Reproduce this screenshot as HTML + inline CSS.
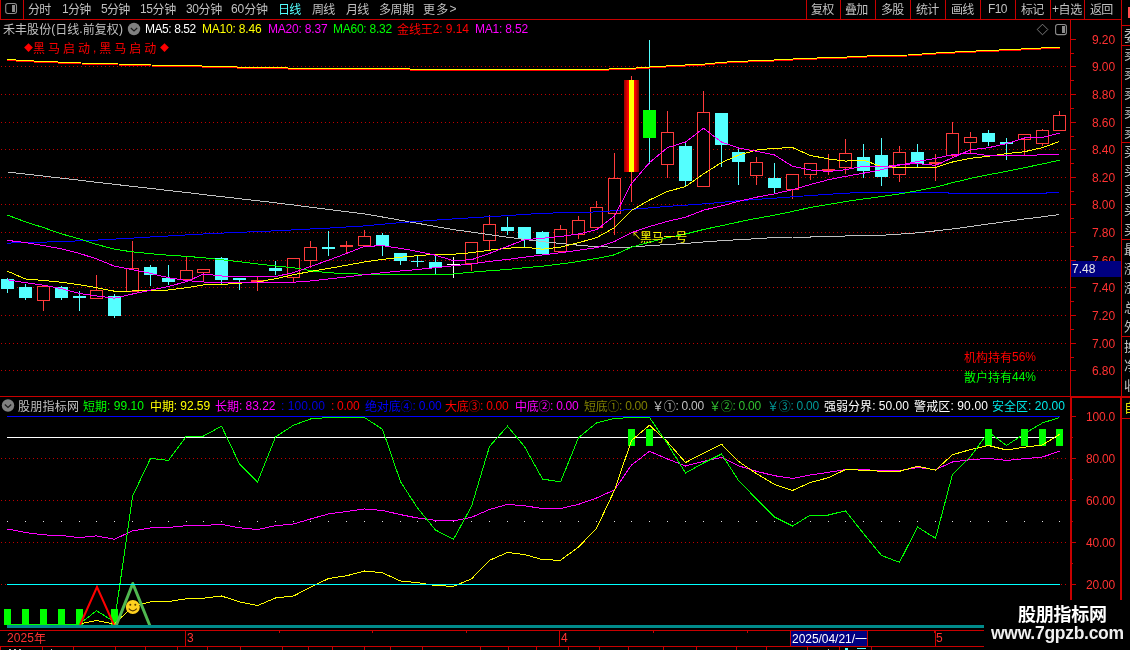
<!DOCTYPE html>
<html lang="zh"><head><meta charset="utf-8"><title>禾丰股份 日线</title>
<style>
html,body{margin:0;padding:0;background:#000;}
#app{position:relative;width:1130px;height:650px;overflow:hidden;background:#000;font-family:"Liberation Sans","Noto Sans CJK SC",sans-serif;}
svg{position:absolute;left:0;top:0;}
.t{position:absolute;white-space:nowrap;will-change:transform;}
.c{position:relative;top:1px;}
</style></head><body><div id="app">
<svg width="1130" height="650" viewBox="0 0 1130 650" shape-rendering="crispEdges">
<defs><linearGradient id="gb" x1="0" x2="1" y1="0" y2="0"><stop offset="0" stop-color="#7a0000"/><stop offset="0.2" stop-color="#d00000"/><stop offset="0.36" stop-color="#ff2000"/><stop offset="0.42" stop-color="#ffff00"/><stop offset="0.6" stop-color="#ffff00"/><stop offset="0.66" stop-color="#ff2000"/><stop offset="0.8" stop-color="#d00000"/><stop offset="1" stop-color="#7a0000"/></linearGradient></defs>
<line x1="1" y1="66.5" x2="1067" y2="66.5" stroke="#c00000" stroke-dasharray="1 3"/>
<line x1="1" y1="94.5" x2="1067" y2="94.5" stroke="#c00000" stroke-dasharray="1 3"/>
<line x1="1" y1="122.5" x2="1067" y2="122.5" stroke="#c00000" stroke-dasharray="1 3"/>
<line x1="1" y1="149.5" x2="1067" y2="149.5" stroke="#c00000" stroke-dasharray="1 3"/>
<line x1="1" y1="177.5" x2="1067" y2="177.5" stroke="#c00000" stroke-dasharray="1 3"/>
<line x1="1" y1="204.5" x2="1067" y2="204.5" stroke="#c00000" stroke-dasharray="1 3"/>
<line x1="1" y1="232.5" x2="1067" y2="232.5" stroke="#c00000" stroke-dasharray="1 3"/>
<line x1="1" y1="260.5" x2="1067" y2="260.5" stroke="#c00000" stroke-dasharray="1 3"/>
<line x1="1" y1="287.5" x2="1067" y2="287.5" stroke="#c00000" stroke-dasharray="1 3"/>
<line x1="1" y1="315.5" x2="1067" y2="315.5" stroke="#c00000" stroke-dasharray="1 3"/>
<line x1="1" y1="343.5" x2="1067" y2="343.5" stroke="#c00000" stroke-dasharray="1 3"/>
<line x1="1" y1="370.5" x2="1067" y2="370.5" stroke="#c00000" stroke-dasharray="1 3"/>
<line x1="1" y1="458.5" x2="1067" y2="458.5" stroke="#c00000" stroke-dasharray="1 3"/>
<line x1="1" y1="500.5" x2="1067" y2="500.5" stroke="#c00000" stroke-dasharray="1 3"/>
<line x1="1" y1="542.5" x2="1067" y2="542.5" stroke="#c00000" stroke-dasharray="1 3"/>
<line x1="1" y1="584.5" x2="1067" y2="584.5" stroke="#c00000" stroke-dasharray="1 3"/>
<rect x="0" y="19" width="1122" height="1" fill="#c80000"/>
<rect x="0" y="0" width="1" height="20" fill="#c80000"/>
<rect x="23" y="0" width="1" height="20" fill="#c80000"/>
<rect x="806" y="0" width="1" height="20" fill="#c80000"/>
<rect x="840" y="0" width="1" height="20" fill="#c80000"/>
<rect x="875" y="0" width="1" height="20" fill="#c80000"/>
<rect x="910" y="0" width="1" height="20" fill="#c80000"/>
<rect x="945" y="0" width="1" height="20" fill="#c80000"/>
<rect x="980" y="0" width="1" height="20" fill="#c80000"/>
<rect x="1015" y="0" width="1" height="20" fill="#c80000"/>
<rect x="1050" y="0" width="1" height="20" fill="#c80000"/>
<rect x="1084" y="0" width="1" height="20" fill="#c80000"/>
<rect x="1121" y="0" width="1" height="600" fill="#c80000"/>
<rect x="1070" y="19" width="1" height="581" fill="#c80000"/>
<rect x="1120" y="396" width="1" height="204" fill="#c80000"/>
<rect x="1071" y="396" width="1" height="204" fill="#c80000"/>
<rect x="0" y="396" width="1130" height="1" fill="#c80000"/>
<rect x="1070" y="397" width="60" height="1" fill="#c80000"/>
<rect x="1122" y="418" width="8" height="1" fill="#c80000"/>
<rect x="1121" y="25" width="9" height="1" fill="#c80000"/>
<rect x="1121" y="45" width="9" height="1" fill="#c80000"/>
<rect x="1121" y="142" width="9" height="1" fill="#c80000"/>
<rect x="1121" y="239" width="9" height="1" fill="#c80000"/>
<rect x="1121" y="336" width="9" height="1" fill="#c80000"/>
<rect x="0" y="630" width="984" height="1" fill="#c80000"/>
<rect x="0" y="646" width="984" height="1" fill="#c80000"/>
<rect x="1071" y="39" width="5" height="1" fill="#c80000"/>
<rect x="1071" y="53" width="3" height="1" fill="#c80000"/>
<rect x="1071" y="66" width="5" height="1" fill="#c80000"/>
<rect x="1071" y="80" width="3" height="1" fill="#c80000"/>
<rect x="1071" y="94" width="5" height="1" fill="#c80000"/>
<rect x="1071" y="108" width="3" height="1" fill="#c80000"/>
<rect x="1071" y="122" width="5" height="1" fill="#c80000"/>
<rect x="1071" y="136" width="3" height="1" fill="#c80000"/>
<rect x="1071" y="149" width="5" height="1" fill="#c80000"/>
<rect x="1071" y="163" width="3" height="1" fill="#c80000"/>
<rect x="1071" y="177" width="5" height="1" fill="#c80000"/>
<rect x="1071" y="191" width="3" height="1" fill="#c80000"/>
<rect x="1071" y="204" width="5" height="1" fill="#c80000"/>
<rect x="1071" y="218" width="3" height="1" fill="#c80000"/>
<rect x="1071" y="232" width="5" height="1" fill="#c80000"/>
<rect x="1071" y="246" width="3" height="1" fill="#c80000"/>
<rect x="1071" y="260" width="5" height="1" fill="#c80000"/>
<rect x="1071" y="274" width="3" height="1" fill="#c80000"/>
<rect x="1071" y="287" width="5" height="1" fill="#c80000"/>
<rect x="1071" y="301" width="3" height="1" fill="#c80000"/>
<rect x="1071" y="315" width="5" height="1" fill="#c80000"/>
<rect x="1071" y="329" width="3" height="1" fill="#c80000"/>
<rect x="1071" y="343" width="5" height="1" fill="#c80000"/>
<rect x="1071" y="357" width="3" height="1" fill="#c80000"/>
<rect x="1071" y="370" width="5" height="1" fill="#c80000"/>
<rect x="1071" y="416" width="5" height="1" fill="#c80000"/>
<rect x="1071" y="437" width="2" height="1" fill="#c80000"/>
<rect x="1071" y="458" width="5" height="1" fill="#c80000"/>
<rect x="1071" y="479" width="2" height="1" fill="#c80000"/>
<rect x="1071" y="500" width="5" height="1" fill="#c80000"/>
<rect x="1071" y="521" width="2" height="1" fill="#c80000"/>
<rect x="1071" y="542" width="5" height="1" fill="#c80000"/>
<rect x="1071" y="563" width="2" height="1" fill="#c80000"/>
<rect x="1071" y="584" width="5" height="1" fill="#c80000"/>
<rect x="7" y="416" width="1053" height="1" fill="#0000ff"/>
<rect x="7" y="437" width="1053" height="1" fill="#ffffff"/>
<rect x="7" y="584" width="1053" height="1" fill="#00ffff"/>
<rect x="7" y="521" width="1" height="1" fill="#e0e0e0"/>
<rect x="25" y="521" width="1" height="1" fill="#e0e0e0"/>
<rect x="43" y="521" width="1" height="1" fill="#e0e0e0"/>
<rect x="61" y="521" width="1" height="1" fill="#e0e0e0"/>
<rect x="79" y="521" width="1" height="1" fill="#e0e0e0"/>
<rect x="96" y="521" width="1" height="1" fill="#e0e0e0"/>
<rect x="114" y="521" width="1" height="1" fill="#e0e0e0"/>
<rect x="132" y="521" width="1" height="1" fill="#e0e0e0"/>
<rect x="150" y="521" width="1" height="1" fill="#e0e0e0"/>
<rect x="168" y="521" width="1" height="1" fill="#e0e0e0"/>
<rect x="186" y="521" width="1" height="1" fill="#e0e0e0"/>
<rect x="203" y="521" width="1" height="1" fill="#e0e0e0"/>
<rect x="221" y="521" width="1" height="1" fill="#e0e0e0"/>
<rect x="239" y="521" width="1" height="1" fill="#e0e0e0"/>
<rect x="257" y="521" width="1" height="1" fill="#e0e0e0"/>
<rect x="275" y="521" width="1" height="1" fill="#e0e0e0"/>
<rect x="293" y="521" width="1" height="1" fill="#e0e0e0"/>
<rect x="310" y="521" width="1" height="1" fill="#e0e0e0"/>
<rect x="328" y="521" width="1" height="1" fill="#e0e0e0"/>
<rect x="346" y="521" width="1" height="1" fill="#e0e0e0"/>
<rect x="364" y="521" width="1" height="1" fill="#e0e0e0"/>
<rect x="382" y="521" width="1" height="1" fill="#e0e0e0"/>
<rect x="400" y="521" width="1" height="1" fill="#e0e0e0"/>
<rect x="417" y="521" width="1" height="1" fill="#e0e0e0"/>
<rect x="435" y="521" width="1" height="1" fill="#e0e0e0"/>
<rect x="453" y="521" width="1" height="1" fill="#e0e0e0"/>
<rect x="471" y="521" width="1" height="1" fill="#e0e0e0"/>
<rect x="489" y="521" width="1" height="1" fill="#e0e0e0"/>
<rect x="507" y="521" width="1" height="1" fill="#e0e0e0"/>
<rect x="524" y="521" width="1" height="1" fill="#e0e0e0"/>
<rect x="542" y="521" width="1" height="1" fill="#e0e0e0"/>
<rect x="560" y="521" width="1" height="1" fill="#e0e0e0"/>
<rect x="578" y="521" width="1" height="1" fill="#e0e0e0"/>
<rect x="596" y="521" width="1" height="1" fill="#e0e0e0"/>
<rect x="614" y="521" width="1" height="1" fill="#e0e0e0"/>
<rect x="631" y="521" width="1" height="1" fill="#e0e0e0"/>
<rect x="649" y="521" width="1" height="1" fill="#e0e0e0"/>
<rect x="667" y="521" width="1" height="1" fill="#e0e0e0"/>
<rect x="685" y="521" width="1" height="1" fill="#e0e0e0"/>
<rect x="703" y="521" width="1" height="1" fill="#e0e0e0"/>
<rect x="721" y="521" width="1" height="1" fill="#e0e0e0"/>
<rect x="738" y="521" width="1" height="1" fill="#e0e0e0"/>
<rect x="756" y="521" width="1" height="1" fill="#e0e0e0"/>
<rect x="774" y="521" width="1" height="1" fill="#e0e0e0"/>
<rect x="792" y="521" width="1" height="1" fill="#e0e0e0"/>
<rect x="810" y="521" width="1" height="1" fill="#e0e0e0"/>
<rect x="828" y="521" width="1" height="1" fill="#e0e0e0"/>
<rect x="845" y="521" width="1" height="1" fill="#e0e0e0"/>
<rect x="863" y="521" width="1" height="1" fill="#e0e0e0"/>
<rect x="881" y="521" width="1" height="1" fill="#e0e0e0"/>
<rect x="899" y="521" width="1" height="1" fill="#e0e0e0"/>
<rect x="917" y="521" width="1" height="1" fill="#e0e0e0"/>
<rect x="935" y="521" width="1" height="1" fill="#e0e0e0"/>
<rect x="952" y="521" width="1" height="1" fill="#e0e0e0"/>
<rect x="970" y="521" width="1" height="1" fill="#e0e0e0"/>
<rect x="988" y="521" width="1" height="1" fill="#e0e0e0"/>
<rect x="1006" y="521" width="1" height="1" fill="#e0e0e0"/>
<rect x="1024" y="521" width="1" height="1" fill="#e0e0e0"/>
<rect x="1042" y="521" width="1" height="1" fill="#e0e0e0"/>
<rect x="1059" y="521" width="1" height="1" fill="#e0e0e0"/>
<rect x="7" y="625" width="977" height="3" fill="#008b8b"/>
<rect x="7" y="278" width="1" height="15" fill="#54ffff"/>
<rect x="1" y="279" width="13" height="10" fill="#54ffff"/>
<rect x="25" y="284" width="1" height="16" fill="#54ffff"/>
<rect x="19" y="287" width="13" height="11" fill="#54ffff"/>
<rect x="43" y="301" width="1" height="10" fill="#ff3c3c"/>
<rect x="37.5" y="286.5" width="12" height="14" fill="#000" stroke="#ff3c3c"/>
<rect x="61" y="286" width="1" height="14" fill="#54ffff"/>
<rect x="55" y="287" width="13" height="11" fill="#54ffff"/>
<rect x="79" y="291" width="1" height="20" fill="#54ffff"/>
<rect x="73" y="296" width="13" height="2" fill="#54ffff"/>
<rect x="96" y="275" width="1" height="15" fill="#ff3c3c"/>
<rect x="90.5" y="290.5" width="12" height="8" fill="#000" stroke="#ff3c3c"/>
<rect x="114" y="294" width="1" height="24" fill="#54ffff"/>
<rect x="108" y="296" width="13" height="20" fill="#54ffff"/>
<rect x="132" y="241" width="1" height="27" fill="#ff3c3c"/>
<rect x="126.5" y="268.5" width="12" height="23" fill="#000" stroke="#ff3c3c"/>
<rect x="150" y="265" width="1" height="21" fill="#54ffff"/>
<rect x="144" y="267" width="13" height="8" fill="#54ffff"/>
<rect x="168" y="265" width="1" height="20" fill="#54ffff"/>
<rect x="162" y="278" width="13" height="4" fill="#54ffff"/>
<rect x="186" y="257" width="1" height="13" fill="#ff3c3c"/>
<rect x="180.5" y="270.5" width="12" height="9" fill="#000" stroke="#ff3c3c"/>
<rect x="203" y="273" width="1" height="9" fill="#ff3c3c"/>
<rect x="197.5" y="269.5" width="12" height="3" fill="#000" stroke="#ff3c3c"/>
<rect x="221" y="257" width="1" height="28" fill="#54ffff"/>
<rect x="215" y="258" width="13" height="22" fill="#54ffff"/>
<rect x="239" y="278" width="1" height="12" fill="#54ffff"/>
<rect x="233" y="278" width="13" height="2" fill="#54ffff"/>
<rect x="257" y="277" width="1" height="14" fill="#ff3c3c"/>
<rect x="251" y="280" width="13" height="2" fill="#ff3c3c"/>
<rect x="275" y="261" width="1" height="14" fill="#54ffff"/>
<rect x="269" y="268" width="13" height="3" fill="#54ffff"/>
<rect x="293" y="278" width="1" height="4" fill="#ff3c3c"/>
<rect x="287.5" y="258.5" width="12" height="19" fill="#000" stroke="#ff3c3c"/>
<rect x="310" y="241" width="1" height="6" fill="#ff3c3c"/>
<rect x="310" y="261" width="1" height="7" fill="#ff3c3c"/>
<rect x="304.5" y="247.5" width="12" height="13" fill="#000" stroke="#ff3c3c"/>
<rect x="328" y="231" width="1" height="25" fill="#54ffff"/>
<rect x="322" y="247" width="13" height="2" fill="#54ffff"/>
<rect x="346" y="241" width="1" height="12" fill="#ff3c3c"/>
<rect x="340" y="245" width="13" height="2" fill="#ff3c3c"/>
<rect x="364" y="230" width="1" height="6" fill="#ff3c3c"/>
<rect x="358.5" y="236.5" width="12" height="9" fill="#000" stroke="#ff3c3c"/>
<rect x="382" y="233" width="1" height="23" fill="#54ffff"/>
<rect x="376" y="235" width="13" height="11" fill="#54ffff"/>
<rect x="400" y="253" width="1" height="12" fill="#54ffff"/>
<rect x="394" y="253" width="13" height="8" fill="#54ffff"/>
<rect x="417" y="255" width="1" height="12" fill="#54ffff"/>
<rect x="411" y="261" width="13" height="1" fill="#54ffff"/>
<rect x="435" y="256" width="1" height="18" fill="#54ffff"/>
<rect x="429" y="262" width="13" height="6" fill="#54ffff"/>
<rect x="453" y="257" width="1" height="21" fill="#fff"/>
<rect x="447" y="264" width="13" height="1" fill="#fff"/>
<rect x="471" y="264" width="1" height="7" fill="#ff3c3c"/>
<rect x="465.5" y="242.5" width="12" height="21" fill="#000" stroke="#ff3c3c"/>
<rect x="489" y="215" width="1" height="9" fill="#ff3c3c"/>
<rect x="489" y="241" width="1" height="9" fill="#ff3c3c"/>
<rect x="483.5" y="224.5" width="12" height="16" fill="#000" stroke="#ff3c3c"/>
<rect x="507" y="217" width="1" height="18" fill="#54ffff"/>
<rect x="501" y="227" width="13" height="4" fill="#54ffff"/>
<rect x="524" y="227" width="1" height="20" fill="#54ffff"/>
<rect x="518" y="227" width="13" height="12" fill="#54ffff"/>
<rect x="542" y="231" width="1" height="24" fill="#54ffff"/>
<rect x="536" y="232" width="13" height="22" fill="#54ffff"/>
<rect x="560" y="225" width="1" height="4" fill="#ff3c3c"/>
<rect x="560" y="252" width="1" height="1" fill="#ff3c3c"/>
<rect x="554.5" y="229.5" width="12" height="22" fill="#000" stroke="#ff3c3c"/>
<rect x="578" y="216" width="1" height="4" fill="#ff3c3c"/>
<rect x="578" y="235" width="1" height="4" fill="#ff3c3c"/>
<rect x="572.5" y="220.5" width="12" height="14" fill="#000" stroke="#ff3c3c"/>
<rect x="596" y="201" width="1" height="6" fill="#ff3c3c"/>
<rect x="590.5" y="207.5" width="12" height="20" fill="#000" stroke="#ff3c3c"/>
<rect x="614" y="153" width="1" height="25" fill="#ff3c3c"/>
<rect x="614" y="214" width="1" height="21" fill="#ff3c3c"/>
<rect x="608.5" y="178.5" width="12" height="35" fill="#000" stroke="#ff3c3c"/>
<rect x="631" y="76" width="1" height="126" fill="#ff3c3c"/>
<rect x="624" y="80" width="1" height="92" fill="#a00000"/>
<rect x="625" y="80" width="1" height="92" fill="#b80000"/>
<rect x="626" y="80" width="1" height="92" fill="#d00000"/>
<rect x="627" y="80" width="1" height="92" fill="#f00000"/>
<rect x="628" y="80" width="1" height="92" fill="#ff0000"/>
<rect x="629" y="80" width="1" height="92" fill="#ffff00"/>
<rect x="630" y="80" width="1" height="92" fill="#ffff00"/>
<rect x="631" y="80" width="1" height="92" fill="#ffff00"/>
<rect x="632" y="80" width="1" height="92" fill="#ffff00"/>
<rect x="633" y="80" width="1" height="92" fill="#ffff00"/>
<rect x="634" y="80" width="1" height="92" fill="#ff0000"/>
<rect x="635" y="80" width="1" height="92" fill="#f00000"/>
<rect x="636" y="80" width="1" height="92" fill="#d00000"/>
<rect x="637" y="80" width="1" height="92" fill="#b00000"/>
<rect x="638" y="80" width="1" height="92" fill="#900000"/>
<rect x="649" y="40" width="1" height="124" fill="#54ffff"/>
<rect x="643" y="110" width="13" height="28" fill="#00ff00"/>
<rect x="667" y="111" width="1" height="21" fill="#ff3c3c"/>
<rect x="667" y="165" width="1" height="13" fill="#ff3c3c"/>
<rect x="661.5" y="132.5" width="12" height="32" fill="#000" stroke="#ff3c3c"/>
<rect x="685" y="142" width="1" height="44" fill="#54ffff"/>
<rect x="679" y="146" width="13" height="35" fill="#54ffff"/>
<rect x="703" y="91" width="1" height="21" fill="#ff3c3c"/>
<rect x="697.5" y="112.5" width="12" height="74" fill="#000" stroke="#ff3c3c"/>
<rect x="721" y="113" width="1" height="54" fill="#54ffff"/>
<rect x="715" y="113" width="13" height="32" fill="#54ffff"/>
<rect x="738" y="147" width="1" height="38" fill="#54ffff"/>
<rect x="732" y="152" width="13" height="10" fill="#54ffff"/>
<rect x="756" y="157" width="1" height="5" fill="#ff3c3c"/>
<rect x="756" y="176" width="1" height="9" fill="#ff3c3c"/>
<rect x="750.5" y="162.5" width="12" height="13" fill="#000" stroke="#ff3c3c"/>
<rect x="774" y="163" width="1" height="30" fill="#54ffff"/>
<rect x="768" y="178" width="13" height="10" fill="#54ffff"/>
<rect x="792" y="190" width="1" height="9" fill="#ff3c3c"/>
<rect x="786.5" y="174.5" width="12" height="15" fill="#000" stroke="#ff3c3c"/>
<rect x="810" y="175" width="1" height="5" fill="#ff3c3c"/>
<rect x="804.5" y="163.5" width="12" height="11" fill="#000" stroke="#ff3c3c"/>
<rect x="828" y="154" width="1" height="21" fill="#ff3c3c"/>
<rect x="822" y="169" width="13" height="2" fill="#ff3c3c"/>
<rect x="845" y="139" width="1" height="14" fill="#ff3c3c"/>
<rect x="845" y="168" width="1" height="6" fill="#ff3c3c"/>
<rect x="839.5" y="153.5" width="12" height="14" fill="#000" stroke="#ff3c3c"/>
<rect x="863" y="144" width="1" height="34" fill="#54ffff"/>
<rect x="857" y="157" width="13" height="14" fill="#54ffff"/>
<rect x="881" y="138" width="1" height="48" fill="#54ffff"/>
<rect x="875" y="155" width="13" height="22" fill="#54ffff"/>
<rect x="899" y="146" width="1" height="6" fill="#ff3c3c"/>
<rect x="899" y="175" width="1" height="7" fill="#ff3c3c"/>
<rect x="893.5" y="152.5" width="12" height="22" fill="#000" stroke="#ff3c3c"/>
<rect x="917" y="144" width="1" height="23" fill="#54ffff"/>
<rect x="911" y="152" width="13" height="12" fill="#54ffff"/>
<rect x="935" y="154" width="1" height="27" fill="#ff3c3c"/>
<rect x="929" y="162" width="13" height="2" fill="#ff3c3c"/>
<rect x="952" y="122" width="1" height="11" fill="#ff3c3c"/>
<rect x="952" y="156" width="1" height="2" fill="#ff3c3c"/>
<rect x="946.5" y="133.5" width="12" height="22" fill="#000" stroke="#ff3c3c"/>
<rect x="970" y="132" width="1" height="5" fill="#ff3c3c"/>
<rect x="970" y="143" width="1" height="10" fill="#ff3c3c"/>
<rect x="964.5" y="137.5" width="12" height="5" fill="#000" stroke="#ff3c3c"/>
<rect x="988" y="130" width="1" height="16" fill="#54ffff"/>
<rect x="982" y="133" width="13" height="9" fill="#54ffff"/>
<rect x="1006" y="138" width="1" height="22" fill="#54ffff"/>
<rect x="1000" y="142" width="13" height="2" fill="#54ffff"/>
<rect x="1024" y="140" width="1" height="15" fill="#ff3c3c"/>
<rect x="1018.5" y="134.5" width="12" height="5" fill="#000" stroke="#ff3c3c"/>
<rect x="1042" y="129" width="1" height="1" fill="#ff3c3c"/>
<rect x="1042" y="144" width="1" height="2" fill="#ff3c3c"/>
<rect x="1036.5" y="130.5" width="12" height="13" fill="#000" stroke="#ff3c3c"/>
<rect x="1059" y="111" width="1" height="4" fill="#ff3c3c"/>
<rect x="1053.5" y="115.5" width="12" height="15" fill="#000" stroke="#ff3c3c"/>
<polyline points="7.5,172.0 25.5,174.1 43.5,176.1 61.5,178.2 79.5,180.2 96.5,182.3 114.5,184.3 132.5,186.4 150.5,188.4 168.5,190.5 186.5,192.5 203.5,194.6 221.5,196.6 239.5,198.7 257.5,200.7 275.5,202.8 293.5,205.0 310.5,207.2 328.5,209.5 346.5,211.7 364.5,213.9 382.5,217.0 400.5,220.2 417.5,223.3 435.5,226.5 453.5,229.6 471.5,232.1 489.5,234.7 507.5,237.2 524.5,239.4 542.5,241.6 560.5,243.5 578.5,245.2 596.5,246.7 614.5,247.2 631.5,247.0 649.5,245.7 667.5,244.5 685.5,243.5 703.5,242.0 721.5,240.7 738.5,239.7 756.5,238.7 774.5,237.5 792.5,237.0 810.5,237.0 828.5,236.5 845.5,236.0 863.5,235.7 881.5,235.3 899.5,234.1 917.5,232.8 935.5,230.9 952.5,229.0 970.5,226.5 988.5,224.0 1006.5,221.5 1024.5,219.0 1042.5,216.8 1059.5,214.5" fill="none" stroke="#c0c0c0" stroke-width="1" />
<polyline points="7.5,243.1 25.5,242.6 43.5,242.1 61.5,241.6 79.5,240.8 96.5,240.1 114.5,239.1 132.5,238.1 150.5,237.0 168.5,236.0 186.5,234.9 203.5,234.0 221.5,233.1 239.5,232.3 257.5,231.6 275.5,230.8 293.5,229.9 310.5,229.0 328.5,228.1 346.5,227.0 364.5,225.9 382.5,224.2 400.5,222.6 417.5,221.4 435.5,220.1 453.5,218.9 471.5,217.8 489.5,216.7 507.5,215.6 524.5,214.4 542.5,213.3 560.5,212.8 578.5,212.4 596.5,211.9 614.5,210.7 631.5,209.4 649.5,207.9 667.5,206.4 685.5,205.2 703.5,203.9 721.5,202.3 738.5,200.7 756.5,199.4 774.5,198.2 792.5,196.8 810.5,195.5 828.5,194.3 845.5,193.2 863.5,192.4 881.5,192.4 899.5,192.4 917.5,192.4 935.5,192.4 952.5,193.2 970.5,193.2 988.5,193.2 1006.5,193.2 1024.5,193.2 1042.5,193.2 1059.5,192.4" fill="none" stroke="#0000ff" stroke-width="1" />
<polyline points="7.5,215.1 25.5,221.9 43.5,227.6 61.5,233.9 79.5,238.9 96.5,244.4 114.5,249.2 132.5,251.9 150.5,253.7 168.5,255.2 186.5,256.4 203.5,257.7 221.5,259.7 239.5,261.7 257.5,263.9 275.5,266.0 293.5,267.7 310.5,270.7 328.5,272.7 346.5,273.7 364.5,274.2 382.5,274.3 400.5,274.3 417.5,274.3 435.5,274.3 453.5,274.0 471.5,272.2 489.5,270.7 507.5,269.5 524.5,267.7 542.5,266.2 560.5,264.0 578.5,261.5 596.5,258.5 614.5,254.8 631.5,247.2 649.5,242.2 667.5,237.7 685.5,234.0 703.5,229.5 721.5,225.7 738.5,222.0 756.5,218.4 774.5,215.2 792.5,211.4 810.5,207.5 828.5,204.5 845.5,201.5 863.5,199.0 881.5,196.5 899.5,194.0 917.5,190.7 935.5,187.2 952.5,182.7 970.5,178.4 988.5,174.7 1006.5,171.4 1024.5,167.7 1042.5,163.9 1059.5,160.2" fill="none" stroke="#00ff00" stroke-width="1" />
<polyline points="7.5,271.2 25.5,279.0 43.5,280.5 61.5,282.2 79.5,284.7 96.5,287.7 114.5,291.2 132.5,291.0 150.5,290.7 168.5,290.0 186.5,287.7 203.5,285.0 221.5,284.5 239.5,283.2 257.5,282.0 275.5,278.7 293.5,274.7 310.5,271.5 328.5,268.5 346.5,265.2 364.5,262.0 382.5,259.4 400.5,257.2 417.5,255.7 435.5,254.2 453.5,254.2 471.5,252.7 489.5,250.2 507.5,248.2 524.5,247.2 542.5,249.2 560.5,247.2 578.5,242.7 596.5,237.7 614.5,227.7 631.5,210.4 649.5,200.0 667.5,191.4 685.5,186.6 703.5,173.9 721.5,162.6 738.5,155.1 756.5,150.1 774.5,148.3 792.5,147.6 810.5,155.5 828.5,158.9 845.5,161.1 863.5,160.1 881.5,166.6 899.5,167.3 917.5,167.5 935.5,167.5 952.5,162.0 970.5,158.3 988.5,156.2 1006.5,153.6 1024.5,151.7 1042.5,147.6 1059.5,141.5" fill="none" stroke="#ffff00" stroke-width="1" />
<polyline points="7.5,240.4 25.5,242.6 43.5,245.6 61.5,248.9 79.5,253.4 96.5,258.9 114.5,266.2 132.5,269.7 150.5,273.4 168.5,277.7 186.5,280.5 203.5,282.0 221.5,282.5 239.5,282.7 257.5,282.7 275.5,282.6 293.5,282.2 310.5,281.0 328.5,279.0 346.5,277.0 364.5,274.7 382.5,272.7 400.5,271.0 417.5,269.5 435.5,267.7 453.5,265.7 471.5,264.0 489.5,261.4 507.5,259.4 524.5,257.2 542.5,255.0 560.5,252.7 578.5,250.2 596.5,247.7 614.5,241.5 631.5,232.7 649.5,226.5 667.5,221.4 685.5,217.2 703.5,210.2 721.5,205.9 738.5,201.4 756.5,197.2 774.5,193.9 792.5,189.6 810.5,184.5 828.5,179.7 845.5,176.4 863.5,173.2 881.5,169.7 899.5,165.1 917.5,161.4 935.5,158.4 952.5,154.6 970.5,153.1 988.5,155.6 1006.5,155.9 1024.5,155.9 1042.5,154.6 1059.5,154.5" fill="none" stroke="#ff00ff" stroke-width="1" />
<polyline points="7.5,279.7 25.5,282.7 43.5,285.2 61.5,288.7 79.5,293.5 96.5,296.0 114.5,298.2 132.5,294.0 150.5,290.2 168.5,286.5 186.5,281.5 203.5,274.0 221.5,276.0 239.5,276.5 257.5,276.5 275.5,276.5 293.5,272.7 310.5,266.5 328.5,260.2 346.5,253.4 364.5,246.4 382.5,245.7 400.5,248.4 417.5,251.4 435.5,255.2 453.5,260.7 471.5,259.7 489.5,253.4 507.5,246.4 524.5,239.7 542.5,238.3 560.5,236.5 578.5,234.0 596.5,229.7 614.5,216.0 631.5,183.5 649.5,162.6 667.5,147.6 685.5,142.0 703.5,128.3 721.5,142.0 738.5,148.0 756.5,151.3 774.5,155.0 792.5,166.3 810.5,170.0 828.5,171.5 845.5,169.7 863.5,166.3 881.5,166.9 899.5,164.7 917.5,163.5 935.5,165.4 952.5,157.8 970.5,149.8 988.5,147.7 1006.5,143.6 1024.5,138.0 1042.5,137.5 1059.5,133.1" fill="none" stroke="#ff00ff" stroke-width="1" />
<polyline points="7.0,60.5 34.0,62.0 81.0,64.0 118.0,65.0 151.0,66.0 188.0,66.6 222.0,67.6 259.0,68.6 330.0,69.6 380.0,69.6 454.0,70.6 589.0,71.0 599.0,70.3 632.0,69.3 650.0,68.0 673.0,66.6 707.0,64.9 723.0,63.2 750.0,61.9 774.0,61.0 807.0,59.3 841.0,58.3 875.0,56.6 908.0,56.0 942.0,53.6 976.0,52.0 1009.0,50.6 1043.0,48.9 1060.0,48.6" fill="none" stroke="#ff0000" stroke-width="1" />
<polyline points="7.0,59.5 34.0,61.0 81.0,63.0 118.0,64.0 151.0,65.0 188.0,65.6 222.0,66.6 259.0,67.6 330.0,68.6 380.0,68.6 454.0,69.6 589.0,70.0 599.0,69.3 632.0,68.3 650.0,67.0 673.0,65.6 707.0,63.9 723.0,62.2 750.0,60.9 774.0,60.0 807.0,58.3 841.0,57.3 875.0,55.6 908.0,55.0 942.0,52.6 976.0,51.0 1009.0,49.6 1043.0,47.9 1060.0,47.6" fill="none" stroke="#ffff00" stroke-width="1" />
<rect x="4" y="609" width="7" height="16" fill="#00ff00"/>
<rect x="22" y="609" width="7" height="16" fill="#00ff00"/>
<rect x="40" y="609" width="7" height="16" fill="#00ff00"/>
<rect x="58" y="609" width="7" height="16" fill="#00ff00"/>
<rect x="76" y="609" width="7" height="16" fill="#00ff00"/>
<rect x="111" y="609" width="7" height="16" fill="#00ff00"/>
<rect x="628" y="429" width="7" height="17" fill="#00ff00"/>
<rect x="646" y="429" width="7" height="17" fill="#00ff00"/>
<rect x="985" y="429" width="7" height="17" fill="#00ff00"/>
<rect x="1021" y="429" width="7" height="17" fill="#00ff00"/>
<rect x="1039" y="429" width="7" height="17" fill="#00ff00"/>
<rect x="1056" y="429" width="7" height="17" fill="#00ff00"/>
<polyline points="7.5,529.0 25.5,532.5 43.5,534.9 61.5,535.5 79.5,537.6 96.5,535.9 114.5,539.3 132.5,530.8 150.5,528.0 168.5,527.5 186.5,525.7 203.5,525.4 221.5,524.4 239.5,527.8 257.5,529.5 275.5,525.7 293.5,524.0 310.5,519.0 328.5,513.9 346.5,511.5 364.5,509.0 382.5,510.5 400.5,514.6 417.5,518.0 435.5,520.3 453.5,521.0 471.5,517.3 489.5,509.5 507.5,504.4 524.5,505.8 542.5,508.5 560.5,508.5 578.5,504.4 596.5,498.0 614.5,489.9 631.5,465.0 649.5,451.3 667.5,459.0 685.5,466.0 703.5,461.4 721.5,457.4 738.5,465.8 756.5,471.3 774.5,475.7 792.5,478.4 810.5,475.0 828.5,472.3 845.5,469.6 863.5,469.9 881.5,470.2 899.5,470.6 917.5,467.5 935.5,469.6 952.5,462.0 970.5,459.7 988.5,458.4 1006.5,460.4 1024.5,458.7 1042.5,457.0 1059.5,451.3" fill="none" stroke="#ff00ff" stroke-width="1" />
<polyline points="7.5,624.0 25.5,624.0 43.5,624.0 61.5,624.0 79.5,624.0 96.5,620.5 114.5,624.0 132.5,606.5 150.5,601.9 168.5,601.5 186.5,598.8 203.5,598.2 221.5,596.0 239.5,601.9 257.5,605.6 275.5,598.0 293.5,596.0 310.5,587.3 328.5,578.5 346.5,575.8 364.5,571.0 382.5,572.8 400.5,581.0 417.5,582.6 435.5,585.6 453.5,586.3 471.5,578.9 489.5,560.3 507.5,552.5 524.5,554.5 542.5,559.6 560.5,560.3 578.5,547.0 596.5,528.4 614.5,490.2 631.5,440.5 649.5,425.2 667.5,442.0 685.5,462.5 703.5,453.3 721.5,444.2 738.5,461.4 756.5,473.6 774.5,484.5 792.5,490.5 810.5,482.4 828.5,477.7 845.5,469.6 863.5,470.2 881.5,471.3 899.5,471.3 917.5,466.2 935.5,470.2 952.5,454.7 970.5,449.6 988.5,445.5 1006.5,450.0 1024.5,447.2 1042.5,444.9 1059.5,434.4" fill="none" stroke="#ffff00" stroke-width="1" />
<polyline points="7.5,624.0 25.5,624.0 43.5,624.0 61.5,624.0 79.5,624.0 96.5,610.7 114.5,622.0 132.5,496.3 150.5,458.4 168.5,460.4 186.5,436.0 203.5,436.0 221.5,426.2 239.5,464.0 257.5,482.0 275.5,437.0 293.5,425.2 310.5,419.0 328.5,417.5 346.5,417.5 364.5,417.5 382.5,429.3 400.5,481.7 417.5,508.0 435.5,530.0 453.5,539.3 471.5,506.4 489.5,446.5 507.5,426.2 524.5,446.5 542.5,479.0 560.5,482.0 578.5,437.7 596.5,422.9 614.5,418.5 631.5,417.5 649.5,417.5 667.5,443.8 685.5,473.0 703.5,463.0 721.5,454.0 738.5,480.4 756.5,499.0 774.5,517.0 792.5,526.0 810.5,515.0 828.5,515.0 845.5,510.8 863.5,533.5 881.5,555.5 899.5,562.3 917.5,527.0 935.5,538.3 952.5,474.3 970.5,456.7 988.5,432.0 1006.5,445.5 1024.5,433.7 1042.5,422.9 1059.5,417.5" fill="none" stroke="#00ff00" stroke-width="1" />
<polyline points="80,625 97,587 114,625" fill="none" stroke="#ff0000" stroke-width="2" shape-rendering="auto"/>
<polyline points="116,626 132.8,583.5 150,626" fill="none" stroke="#50b850" stroke-width="3" stroke-linejoin="round" shape-rendering="auto"/>
<g shape-rendering="auto"><circle cx="132.8" cy="607" r="7" fill="#ffd21f"/><circle cx="130.3" cy="604.8" r="1" fill="#5a3b00"/><circle cx="135.3" cy="604.8" r="1" fill="#5a3b00"/><path d="M128.8 608.6 Q132.8 613.2 136.8 608.6" fill="none" stroke="#5a3b00" stroke-width="1.1"/></g>
<rect x="7" y="584" width="1053" height="1" fill="#00ffff"/>
<rect x="7" y="625" width="977" height="3" fill="#008b8b"/>
<rect x="185" y="630" width="1" height="17" fill="#c80000"/>
<rect x="559" y="630" width="1" height="17" fill="#c80000"/>
<rect x="935" y="630" width="1" height="17" fill="#c80000"/>
<rect x="185" y="630" width="1" height="3" fill="#c80000"/>
<rect x="279" y="630" width="1" height="3" fill="#c80000"/>
<rect x="372" y="630" width="1" height="3" fill="#c80000"/>
<rect x="466" y="630" width="1" height="3" fill="#c80000"/>
<rect x="559" y="630" width="1" height="3" fill="#c80000"/>
<rect x="653" y="630" width="1" height="3" fill="#c80000"/>
<rect x="747" y="630" width="1" height="3" fill="#c80000"/>
<rect x="840" y="630" width="1" height="3" fill="#c80000"/>
<rect x="934" y="630" width="1" height="3" fill="#c80000"/>
<rect x="1027" y="630" width="1" height="3" fill="#c80000"/>
<rect x="790" y="631" width="78" height="15" fill="#000080"/>
<rect x="790" y="630" width="1" height="17" fill="#c80000"/>
<rect x="867" y="630" width="1" height="17" fill="#c80000"/>
<rect x="0" y="647" width="1" height="3" fill="#c80000"/>
<rect x="42" y="647" width="1" height="3" fill="#c80000"/>
<rect x="73" y="647" width="1" height="3" fill="#c80000"/>
<rect x="115" y="647" width="1" height="3" fill="#c80000"/>
<rect x="145" y="647" width="1" height="3" fill="#c80000"/>
<rect x="177" y="647" width="1" height="3" fill="#c80000"/>
<rect x="207" y="647" width="1" height="3" fill="#c80000"/>
<rect x="240" y="647" width="1" height="3" fill="#c80000"/>
<rect x="282" y="647" width="1" height="3" fill="#c80000"/>
<rect x="308" y="647" width="1" height="3" fill="#c80000"/>
<rect x="332" y="647" width="1" height="3" fill="#c80000"/>
<rect x="364" y="647" width="1" height="3" fill="#c80000"/>
<rect x="390" y="647" width="1" height="3" fill="#c80000"/>
<rect x="422" y="647" width="1" height="3" fill="#c80000"/>
<rect x="480" y="647" width="1" height="3" fill="#c80000"/>
<rect x="508" y="647" width="1" height="3" fill="#c80000"/>
<rect x="536" y="647" width="1" height="3" fill="#c80000"/>
<rect x="568" y="647" width="1" height="3" fill="#c80000"/>
<rect x="599" y="647" width="1" height="3" fill="#c80000"/>
<rect x="628" y="647" width="1" height="3" fill="#c80000"/>
<rect x="663" y="647" width="1" height="3" fill="#c80000"/>
<rect x="696" y="647" width="1" height="3" fill="#c80000"/>
<rect x="736" y="647" width="1" height="3" fill="#c80000"/>
<rect x="766" y="647" width="1" height="3" fill="#c80000"/>
<rect x="807" y="647" width="1" height="3" fill="#c80000"/>
<rect x="839" y="647" width="1" height="3" fill="#c80000"/>
<rect x="871" y="647" width="1" height="3" fill="#c80000"/>
<rect x="9" y="649" width="2" height="1" fill="#c0c0c0"/>
<rect x="14" y="649" width="2" height="1" fill="#c0c0c0"/>
<rect x="19" y="649" width="2" height="1" fill="#c0c0c0"/>
<rect x="51" y="649" width="1" height="1" fill="#c0c0c0"/>
<rect x="828" y="649" width="1" height="1" fill="#c0c0c0"/>
<rect x="845" y="648" width="3" height="2" fill="#54ffff"/><rect x="857" y="648" width="9" height="1" fill="#54ffff"/>
<g shape-rendering="auto" fill="none" stroke="#8c8c8c" stroke-width="1.1"><rect x="5.7" y="3.5" width="10.8" height="10" rx="2.2"/><rect x="1055.6" y="24.5" width="10.8" height="10.1" rx="2.2"/><path d="M1042.5 24.2 L1047.8 29.5 L1042.5 34.8 L1037.2 29.5 Z" stroke-width="0.9" stroke="#868686"/></g>
<rect x="12" y="5" width="3" height="7" fill="#8c8c8c"/><rect x="1062" y="26" width="3" height="7" fill="#8c8c8c"/>
<g shape-rendering="auto"><circle cx="134" cy="29" r="6.2" fill="#808080"/><path d="M130.8 28 l3.2 3 l3.2 -3" fill="none" stroke="#1a1a1a" stroke-width="1.15"/></g>
<g shape-rendering="auto"><circle cx="8" cy="405.5" r="6.2" fill="#808080"/><path d="M4.8 404.5 l3.2 3 l3.2 -3" fill="none" stroke="#1a1a1a" stroke-width="1.15"/></g>
<rect x="1128" y="7" width="2" height="11" fill="#ff5050"/>
<rect x="984" y="600" width="146" height="50" fill="#000"/>
</svg>
<div class="t" id="t0" style="left:28px;top:3px;color:#c0c0c0;font-size:12px;line-height:12px;letter-spacing:-0.68px;"><span class="c">分时</span></div>
<div class="t" id="t1" style="left:62px;top:3px;color:#c0c0c0;font-size:12px;line-height:12px;letter-spacing:-0.68px;">1<span class="c">分钟</span></div>
<div class="t" id="t2" style="left:101px;top:3px;color:#c0c0c0;font-size:12px;line-height:12px;letter-spacing:-0.68px;">5<span class="c">分钟</span></div>
<div class="t" id="t3" style="left:140px;top:3px;color:#c0c0c0;font-size:12px;line-height:12px;letter-spacing:-0.39px;">15<span class="c">分钟</span></div>
<div class="t" id="t4" style="left:186px;top:3px;color:#c0c0c0;font-size:12px;line-height:12px;letter-spacing:-0.39px;">30<span class="c">分钟</span></div>
<div class="t" id="t5" style="left:231px;top:3px;color:#c0c0c0;font-size:12px;line-height:12px;letter-spacing:-0.11px;">60<span class="c">分钟</span></div>
<div class="t" id="t6" style="left:278px;top:3px;color:#54ffff;font-size:12px;line-height:12px;letter-spacing:-0.68px;"><span class="c">日线</span></div>
<div class="t" id="t7" style="left:312px;top:3px;color:#c0c0c0;font-size:12px;line-height:12px;letter-spacing:-0.68px;"><span class="c">周线</span></div>
<div class="t" id="t8" style="left:346px;top:3px;color:#c0c0c0;font-size:12px;line-height:12px;letter-spacing:-0.68px;"><span class="c">月线</span></div>
<div class="t" id="t9" style="left:379px;top:3px;color:#c0c0c0;font-size:12px;line-height:12px;letter-spacing:-0.41px;"><span class="c">多周期</span></div>
<div class="t" id="t10" style="left:423px;top:3px;color:#c0c0c0;font-size:12px;line-height:12px;letter-spacing:1.19px;"><span class="c">更多</span>></div>
<div class="t" id="t11" style="left:811px;top:3px;color:#c0c0c0;font-size:12px;line-height:12px;letter-spacing:-0.68px;"><span class="c">复权</span></div>
<div class="t" id="t12" style="left:845px;top:3px;color:#c0c0c0;font-size:12px;line-height:12px;letter-spacing:-0.68px;"><span class="c">叠加</span></div>
<div class="t" id="t13" style="left:881px;top:3px;color:#c0c0c0;font-size:12px;line-height:12px;letter-spacing:-0.68px;"><span class="c">多股</span></div>
<div class="t" id="t14" style="left:916px;top:3px;color:#c0c0c0;font-size:12px;line-height:12px;letter-spacing:-0.68px;"><span class="c">统计</span></div>
<div class="t" id="t15" style="left:951px;top:3px;color:#c0c0c0;font-size:12px;line-height:12px;letter-spacing:-0.68px;"><span class="c">画线</span></div>
<div class="t" id="t16" style="left:988px;top:3px;color:#c0c0c0;font-size:12px;line-height:12px;letter-spacing:-0.68px;">F10</div>
<div class="t" id="t17" style="left:1021px;top:3px;color:#c0c0c0;font-size:12px;line-height:12px;letter-spacing:-0.68px;"><span class="c">标记</span></div>
<div class="t" id="t18" style="left:1052px;top:3px;color:#c0c0c0;font-size:12px;line-height:12px;letter-spacing:-0.41px;">+<span class="c">自选</span></div>
<div class="t" id="t19" style="left:1090px;top:3px;color:#c0c0c0;font-size:12px;line-height:12px;letter-spacing:-0.68px;"><span class="c">返回</span></div>
<div class="t" id="t20" style="left:3px;top:23px;color:#c0c0c0;font-size:12px;line-height:12px;letter-spacing:0.05px;"><span class="c">禾丰股份</span>(<span class="c">日线</span>.<span class="c">前复权</span>)</div>
<div class="t" id="t21" style="left:145px;top:23px;color:#ffffff;font-size:12px;line-height:12px;letter-spacing:-0.44px;">MA5: 8.52</div>
<div class="t" id="t22" style="left:202px;top:23px;color:#ffff00;font-size:12px;line-height:12px;letter-spacing:-0.20px;">MA10: 8.46</div>
<div class="t" id="t23" style="left:267.5px;top:23px;color:#ff00ff;font-size:12px;line-height:12px;letter-spacing:-0.20px;">MA20: 8.37</div>
<div class="t" id="t24" style="left:333px;top:23px;color:#00ff00;font-size:12px;line-height:12px;letter-spacing:-0.25px;">MA60: 8.32</div>
<div class="t" id="t25" style="left:397px;top:23px;color:#ff0000;font-size:12px;line-height:12px;letter-spacing:-0.08px;"><span class="c">金线王</span>2: 9.14</div>
<div class="t" id="t26" style="left:475px;top:23px;color:#ff00ff;font-size:12px;line-height:12px;letter-spacing:-0.20px;">MA1: 8.52</div>
<div class="t" id="t27" style="left:33px;top:42px;color:#ff0000;font-size:12px;line-height:12px;letter-spacing:0.00px;letter-spacing:3px;"><span class="c">黑马启动</span>,<span class="c">黑马启动</span></div>
<div class="t" id="t28" style="left:24px;top:43.5px;color:#ff0000;font-size:9px;line-height:9px;letter-spacing:0.00px;">◆</div>
<div class="t" id="t29" style="left:160px;top:43.5px;color:#ff0000;font-size:9px;line-height:9px;letter-spacing:0.00px;">◆</div>
<div class="t" id="t30" style="left:640px;top:230.5px;color:#ffff00;font-size:12px;line-height:12px;letter-spacing:-0.29px;"><span class="c">黑马一号</span></div>
<div class="t" id="t31" style="left:631.5px;top:231.5px;color:#ffff00;font-size:9px;line-height:9px;letter-spacing:0.00px;">↖</div>
<div class="t" id="t32" style="left:964px;top:351px;color:#ff0000;font-size:12px;line-height:12px;letter-spacing:-0.01px;"><span class="c">机构持有</span>56%</div>
<div class="t" id="t33" style="left:964px;top:371px;color:#00ff00;font-size:12px;line-height:12px;letter-spacing:-0.01px;"><span class="c">散户持有</span>44%</div>
<div class="t" id="t34" style="left:17.5px;top:400px;color:#c0c0c0;font-size:12px;line-height:12px;letter-spacing:0.22px;"><span class="c">股朋指标网</span></div>
<div class="t" id="t35" style="left:83px;top:400px;color:#00ff00;font-size:12px;line-height:12px;letter-spacing:0.03px;"><span class="c">短期</span>: 99.10</div>
<div class="t" id="t36" style="left:149.5px;top:400px;color:#ffff00;font-size:12px;line-height:12px;letter-spacing:-0.08px;"><span class="c">中期</span>: 92.59</div>
<div class="t" id="t37" style="left:215px;top:400px;color:#ff00ff;font-size:12px;line-height:12px;letter-spacing:-0.03px;"><span class="c">长期</span>: 83.22</div>
<div class="t" id="t38" style="left:281px;top:400px;color:#0000e0;font-size:12px;line-height:12px;letter-spacing:0.08px;">: 100.00</div>
<div class="t" id="t39" style="left:330.6px;top:400px;color:#ff0000;font-size:12px;line-height:12px;letter-spacing:-0.28px;">: 0.00</div>
<div class="t" id="t40" style="left:365px;top:400px;color:#0000ff;font-size:12px;line-height:12px;letter-spacing:-0.16px;"><span class="c">绝对底④</span>: 0.00</div>
<div class="t" id="t41" style="left:445px;top:400px;color:#ff0000;font-size:12px;line-height:12px;letter-spacing:-0.30px;"><span class="c">大底③</span>: 0.00</div>
<div class="t" id="t42" style="left:514.5px;top:400px;color:#ff00ff;font-size:12px;line-height:12px;letter-spacing:-0.30px;"><span class="c">中底②</span>: 0.00</div>
<div class="t" id="t43" style="left:583.5px;top:400px;color:#808000;font-size:12px;line-height:12px;letter-spacing:-0.30px;"><span class="c">短底①</span>: 0.00</div>
<div class="t" id="t44" style="left:652px;top:400px;color:#c0c0c0;font-size:12px;line-height:12px;letter-spacing:-0.27px;"><span class="c">￥①</span>: 0.00</div>
<div class="t" id="t45" style="left:709px;top:400px;color:#30c030;font-size:12px;line-height:12px;letter-spacing:-0.27px;"><span class="c">￥②</span>: 0.00</div>
<div class="t" id="t46" style="left:766.5px;top:400px;color:#009898;font-size:12px;line-height:12px;letter-spacing:-0.27px;"><span class="c">￥③</span>: 0.00</div>
<div class="t" id="t47" style="left:824px;top:400px;color:#ffffff;font-size:12px;line-height:12px;letter-spacing:0.03px;"><span class="c">强弱分界</span>: 50.00</div>
<div class="t" id="t48" style="left:914px;top:400px;color:#ffffff;font-size:12px;line-height:12px;letter-spacing:0.13px;"><span class="c">警戒区</span>: 90.00</div>
<div class="t" id="t49" style="left:992px;top:400px;color:#00e8e8;font-size:12px;line-height:12px;letter-spacing:0.03px;"><span class="c">安全区</span>: 20.00</div>
<div class="t" id="t50" style="left:1092px;top:34px;color:#ff3232;font-size:12px;line-height:12px;letter-spacing:-0.10px;">9.20</div>
<div class="t" id="t51" style="left:1092px;top:61px;color:#ff3232;font-size:12px;line-height:12px;letter-spacing:-0.10px;">9.00</div>
<div class="t" id="t52" style="left:1092px;top:89px;color:#ff3232;font-size:12px;line-height:12px;letter-spacing:-0.10px;">8.80</div>
<div class="t" id="t53" style="left:1092px;top:117px;color:#ff3232;font-size:12px;line-height:12px;letter-spacing:-0.10px;">8.60</div>
<div class="t" id="t54" style="left:1092px;top:144px;color:#ff3232;font-size:12px;line-height:12px;letter-spacing:-0.10px;">8.40</div>
<div class="t" id="t55" style="left:1092px;top:172px;color:#ff3232;font-size:12px;line-height:12px;letter-spacing:-0.10px;">8.20</div>
<div class="t" id="t56" style="left:1092px;top:199px;color:#ff3232;font-size:12px;line-height:12px;letter-spacing:-0.10px;">8.00</div>
<div class="t" id="t57" style="left:1092px;top:227px;color:#ff3232;font-size:12px;line-height:12px;letter-spacing:-0.10px;">7.80</div>
<div class="t" id="t58" style="left:1092px;top:255px;color:#ff3232;font-size:12px;line-height:12px;letter-spacing:-0.10px;">7.60</div>
<div class="t" id="t59" style="left:1092px;top:282px;color:#ff3232;font-size:12px;line-height:12px;letter-spacing:-0.10px;">7.40</div>
<div class="t" id="t60" style="left:1092px;top:310px;color:#ff3232;font-size:12px;line-height:12px;letter-spacing:-0.10px;">7.20</div>
<div class="t" id="t61" style="left:1092px;top:338px;color:#ff3232;font-size:12px;line-height:12px;letter-spacing:-0.10px;">7.00</div>
<div class="t" id="t62" style="left:1092px;top:365px;color:#ff3232;font-size:12px;line-height:12px;letter-spacing:-0.10px;">6.80</div>
<div class="t" id="t63" style="left:1071px;top:261px;color:#e8e8e8;font-size:12px;line-height:12px;letter-spacing:0.00px;background:#000080;width:49px;height:16px;line-height:16px;padding-left:1px;box-sizing:content-box;">7.48</div>
<div class="t" id="t64" style="left:1086px;top:411px;color:#ff3232;font-size:12px;line-height:12px;letter-spacing:-0.23px;">100.0</div>
<div class="t" id="t65" style="left:1086px;top:453px;color:#ff3232;font-size:12px;line-height:12px;letter-spacing:-0.23px;">80.00</div>
<div class="t" id="t66" style="left:1086px;top:495px;color:#ff3232;font-size:12px;line-height:12px;letter-spacing:-0.23px;">60.00</div>
<div class="t" id="t67" style="left:1086px;top:537px;color:#ff3232;font-size:12px;line-height:12px;letter-spacing:-0.23px;">40.00</div>
<div class="t" id="t68" style="left:1086px;top:579px;color:#ff3232;font-size:12px;line-height:12px;letter-spacing:-0.23px;">20.00</div>
<div class="t" id="t69" style="left:7px;top:632px;color:#ff3232;font-size:12px;line-height:12px;letter-spacing:0.06px;">2025<span class="c">年</span></div>
<div class="t" id="t70" style="left:187px;top:632px;color:#ff3232;font-size:12px;line-height:12px;letter-spacing:0.00px;">3</div>
<div class="t" id="t71" style="left:561px;top:632px;color:#ff3232;font-size:12px;line-height:12px;letter-spacing:0.00px;">4</div>
<div class="t" id="t72" style="left:935.5px;top:632px;color:#ff3232;font-size:12px;line-height:12px;letter-spacing:0.00px;">5</div>
<div class="t" id="t73" style="left:791.5px;top:632.5px;color:#ffffff;font-size:12px;line-height:12px;letter-spacing:-0.04px;">2025/04/21/<span class="c">一</span></div>
<div class="t" id="t74" style="left:1018px;top:606px;color:#ffffff;font-size:18px;line-height:18px;letter-spacing:-0.22px;font-weight:bold;">股朋指标网</div>
<div class="t" id="t75" style="left:991px;top:625px;color:#f0f0f0;font-size:17.5px;line-height:17.5px;letter-spacing:-0.28px;font-weight:bold;">www.7gpzb.com</div>
<div class="t" id="t76" style="left:1124px;top:47px;color:#c0c0c0;font-size:13px;line-height:13px;letter-spacing:0.00px;"><span class="c">卖</span></div>
<div class="t" id="t77" style="left:1124px;top:66px;color:#c0c0c0;font-size:13px;line-height:13px;letter-spacing:0.00px;"><span class="c">卖</span></div>
<div class="t" id="t78" style="left:1124px;top:86px;color:#c0c0c0;font-size:13px;line-height:13px;letter-spacing:0.00px;"><span class="c">卖</span></div>
<div class="t" id="t79" style="left:1124px;top:105px;color:#c0c0c0;font-size:13px;line-height:13px;letter-spacing:0.00px;"><span class="c">卖</span></div>
<div class="t" id="t80" style="left:1124px;top:125px;color:#c0c0c0;font-size:13px;line-height:13px;letter-spacing:0.00px;"><span class="c">卖</span></div>
<div class="t" id="t81" style="left:1124px;top:144px;color:#c0c0c0;font-size:13px;line-height:13px;letter-spacing:0.00px;"><span class="c">买</span></div>
<div class="t" id="t82" style="left:1124px;top:163px;color:#c0c0c0;font-size:13px;line-height:13px;letter-spacing:0.00px;"><span class="c">买</span></div>
<div class="t" id="t83" style="left:1124px;top:183px;color:#c0c0c0;font-size:13px;line-height:13px;letter-spacing:0.00px;"><span class="c">买</span></div>
<div class="t" id="t84" style="left:1124px;top:202px;color:#c0c0c0;font-size:13px;line-height:13px;letter-spacing:0.00px;"><span class="c">买</span></div>
<div class="t" id="t85" style="left:1124px;top:222px;color:#c0c0c0;font-size:13px;line-height:13px;letter-spacing:0.00px;"><span class="c">买</span></div>
<div class="t" id="t86" style="left:1124px;top:242px;color:#c0c0c0;font-size:13px;line-height:13px;letter-spacing:0.00px;"><span class="c">最</span></div>
<div class="t" id="t87" style="left:1124px;top:261px;color:#c0c0c0;font-size:13px;line-height:13px;letter-spacing:0.00px;"><span class="c">涨</span></div>
<div class="t" id="t88" style="left:1124px;top:280px;color:#c0c0c0;font-size:13px;line-height:13px;letter-spacing:0.00px;"><span class="c">涨</span></div>
<div class="t" id="t89" style="left:1124px;top:300px;color:#c0c0c0;font-size:13px;line-height:13px;letter-spacing:0.00px;"><span class="c">总</span></div>
<div class="t" id="t90" style="left:1124px;top:319px;color:#c0c0c0;font-size:13px;line-height:13px;letter-spacing:0.00px;"><span class="c">外</span></div>
<div class="t" id="t91" style="left:1124px;top:339px;color:#c0c0c0;font-size:13px;line-height:13px;letter-spacing:0.00px;"><span class="c">换</span></div>
<div class="t" id="t92" style="left:1124px;top:358px;color:#c0c0c0;font-size:13px;line-height:13px;letter-spacing:0.00px;"><span class="c">净</span></div>
<div class="t" id="t93" style="left:1124px;top:378px;color:#c0c0c0;font-size:13px;line-height:13px;letter-spacing:0.00px;"><span class="c">收</span></div>
<div class="t" id="t94" style="left:1123.5px;top:28px;color:#c0c0c0;font-size:15px;line-height:15px;letter-spacing:0.00px;">委</div>
<div class="t" id="t95" style="left:1124px;top:400px;color:#e0e000;font-size:13px;line-height:13px;letter-spacing:0.00px;"><span class="c">自</span></div>
</div></body></html>
